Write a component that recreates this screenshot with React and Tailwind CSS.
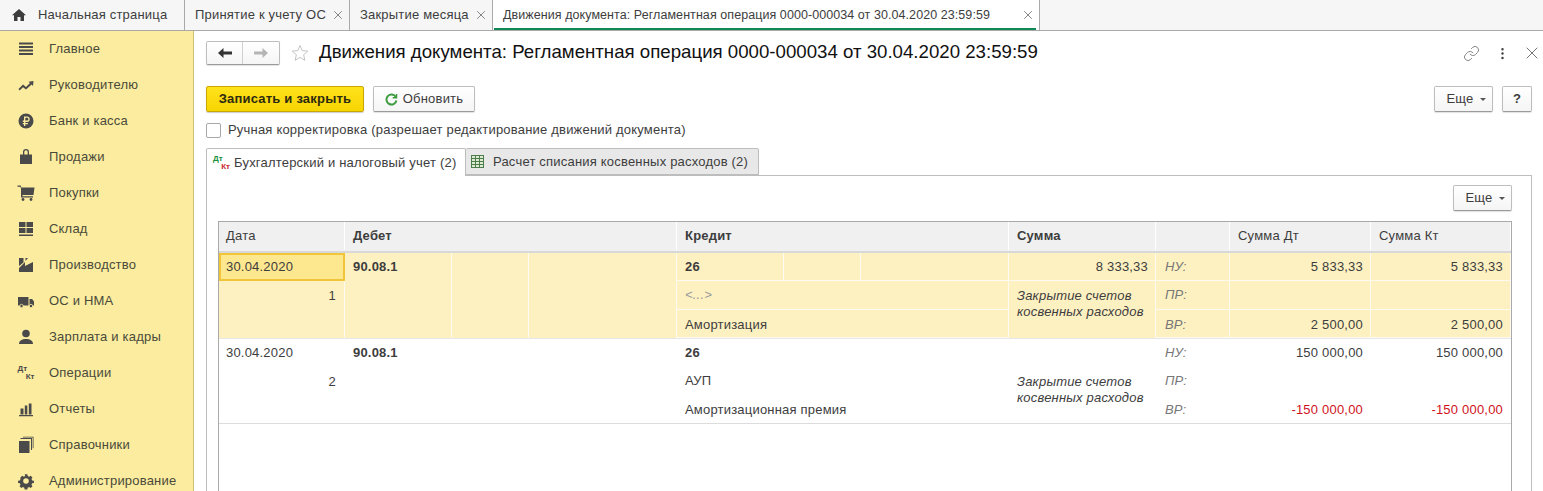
import { Link, MoreVertical, X } from 'lucide-react'

const font = { fontFamily: '"Liberation Sans", Arial, sans-serif' }

const G = ({ children }) => (
  <svg width="18" height="18" viewBox="0 0 18 18" fill="#4a4a4a" className="shrink-0">
    {children}
  </svg>
)

const menuIcons = {
  menu: <G><path d="M2 2.500h14v2H2zM2 6h14v2H2zM2 9.500h14v2H2zM2 13h14v2H2z" /></G>,
  chart: <G><path d="M1.500 13 L6 8.500 L9 11 L13 7 L11.500 5.800 L16.500 5 L16 10 L14.600 8.600 L9 13.600 L6 11.200 L2.600 14.500z" /></G>,
  rub: (
    <G>
      <circle cx="9" cy="9" r="7.500" />
      <path d="M7 4.500h3a2.500 2.500 0 0 1 0 5.400H8.300v1h2.600v1.400H8.300v1.600H7v-1.600H5.800v-1.400H7v-1H5.800V8.600H7zM8.300 5.800v2.800H10a1.400 1.400 0 0 0 0-2.800z" fill="#fbec9f" />
    </G>
  ),
  bag: <G><path d="M3 6.500h3V4a3 3 0 0 1 6 0v2.500h3V16H3zM7.300 6.500h3.400V4a1.700 1.700 0 0 0-3.400 0z" /></G>,
  cart: (
    <G>
      <path d="M0.500 1.500h3.200l.6 2H17.500l-1 7.500H5.500v1.300h10.500v1.300H4V4L3 2.800H.5z" />
      <circle cx="6" cy="15.500" r="1.400" />
      <circle cx="14" cy="15.500" r="1.400" />
    </G>
  ),
  store: <G><path d="M2 2h6.500v5H2zM9.500 2H16v5H9.500zM2 8h6.500v5H2zM9.500 8H16v5H9.500zM2 14.500h14V16H2z" /></G>,
  factory: <G><path d="M2 2h4.500v4.500L2 10zM8.500 2H11L8.500 5zM2 16v-4l6-6v4l8-4v10z" /></G>,
  truck: (
    <G>
      <path d="M1 5h10.500v8.500H1zM12.500 7h2.600L17 9.500v4h-4.500z" />
      <circle cx="4.500" cy="14" r="1.700" stroke="#fbec9f" strokeWidth=".8" />
      <circle cx="14" cy="14" r="1.700" stroke="#fbec9f" strokeWidth=".8" />
    </G>
  ),
  user: <G><circle cx="9" cy="5.500" r="3.800" /><path d="M2 16c0-3.500 3-5 7-5s7 1.500 7 5z" /></G>,
  reports: <G><path d="M3.500 8.500h3v6H3.500zM7.800 5.500h2.500v9H7.800zM11.800 3.500h2.700v11h-2.700zM2 15h14v1.200H2z" /></G>,
  book: (
    <G>
      <path d="M2 5h10.500v12H2z" />
      <path d="M3.500 3h10.500v11h1V2H3.500zM6 .8h10.500v11.500h-.8V1.600H6z" />
    </G>
  ),
  gear: (
    <G>
      <path d="M7.500 1.500h3l.4 2 1.500.7 1.800-1.100 2 2-1.100 1.800.7 1.500 2 .4v2.400l-2 .4-.7 1.500 1.100 1.800-2 2-1.800-1.100-1.500.7-.4 2h-3l-.4-2-1.500-.7-1.800 1.100-2-2 1.100-1.800-.7-1.500-2-.4V8.800l2-.4.7-1.500L2.800 5.100l2-2 1.800 1.100 1.500-.7z" transform="translate(.9 .9) scale(.9)" />
      <circle cx="9" cy="9" r="2.800" fill="#fbec9f" />
    </G>
  ),
}

const DtKt = ({ dark }) => (
  <span className="relative block h-[16px] w-[17px] shrink-0 text-[8px] leading-[8px] font-bold tracking-normal">
    <span className={`absolute top-0 left-0 ${dark ? 'text-[#4a4a4a]' : 'text-[#1a8f3c]'}`}>Дт</span>
    <span className={`absolute right-0 bottom-0 ${dark ? 'text-[#4a4a4a]' : 'text-[#c9252b]'}`}>Кт</span>
  </span>
)

const menu = [
  ['Главное', 'menu'],
  ['Руководителю', 'chart'],
  ['Банк и касса', 'rub'],
  ['Продажи', 'bag'],
  ['Покупки', 'cart'],
  ['Склад', 'store'],
  ['Производство', 'factory'],
  ['ОС и НМА', 'truck'],
  ['Зарплата и кадры', 'user'],
  ['Операции', 'dtkt'],
  ['Отчеты', 'reports'],
  ['Справочники', 'book'],
  ['Администрирование', 'gear'],
]

function TopTab({ label, width, active }) {
  return (
    <div
      className={`relative flex h-full items-center justify-between border-r border-[#a9a9a9] pr-[4px] pl-[10px] ${active ? 'bg-white text-[12.5px] tracking-[0.07px]' : ''}`}
      style={{ width }}
    >
      <span className="whitespace-nowrap">{label}</span>
      <X size={14} strokeWidth={1.2} className="shrink-0 text-[#555]" />
      {active && <div className="absolute right-[3px] bottom-0 left-[1px] h-[2px] bg-[#0f8a55]" />}
    </div>
  )
}

function Btn({ children, className = '' }) {
  return (
    <div className={`flex h-[26px] items-center justify-center rounded-[2px] border border-[#bdbdbd] border-b-[#9a9a9a] bg-gradient-to-b from-white to-[#f5f5f5] shadow-[0_1px_1px_rgba(0,0,0,0.12)] ${className}`}>
      {children}
    </div>
  )
}

function More({ className = '' }) {
  return (
    <Btn className={`w-[59px] gap-[6px] pl-[5px] ${className}`}>
      <span>Еще</span>
      <span className="h-0 w-0 border-x-[3px] border-t-[3px] border-x-transparent border-t-[#555]" />
    </Btn>
  )
}

const cols = 'grid grid-cols-[126px_332px_332px_147px_74px_141px_140px]'

function Row({ n, selected, sub1, sub2, sum, lines, border }) {
  const line = selected ? 'border-[#fffaf0]' : 'border-transparent'
  const cell = `border-r border-b ${line} flex items-center`
  return (
    <div className={`${cols} ${selected ? 'grid-rows-[28px_29px_28px] bg-[#fdf1c2]' : 'grid-rows-[28px_29px_27px]'} ${border}`}>
      {selected ? (
        <div className="flex items-center border-2 border-[#f0c53a] bg-[#fde78f] pl-[5px]">30.04.2020</div>
      ) : (
        <div className={`${cell} pl-[7px]`}>30.04.2020</div>
      )}
      <div className={`${line} col-start-1 row-span-2 row-start-2 flex justify-end border-r pt-[5px] pr-[8px]`}>{n}</div>
      <div className="col-start-2 row-span-3 row-start-1 grid grid-cols-[107px_77px_148px]">
        <div className={`border-r ${line} pt-[4px] pl-[8px] font-bold`}>90.08.1</div>
        <div className={`border-r ${line}`} />
        <div className={`border-r ${line}`} />
      </div>
      <div className={`col-start-3 row-start-1 grid grid-cols-[107px_77px_148px] border-b ${line}`}>
        <div className={`flex items-center border-r ${line} pl-[8px] font-bold`}>26</div>
        <div className={`border-r ${line}`} />
        <div className={`border-r ${line}`} />
      </div>
      <div className={`${cell} col-start-3 row-start-2 pl-[8px] ${sub1 === '<...>' ? 'text-[#9a9a9a] italic' : ''}`}>{sub1}</div>
      <div className={`${cell} col-start-3 row-start-3 pt-[2px] pl-[8px]`}>{sub2}</div>
      <div className={`${cell} col-start-4 row-start-1 justify-end pr-[7px]`}>{sum}</div>
      <div className={`col-start-4 row-span-2 row-start-2 border-r ${line} px-[8px] pt-[7px] leading-[16px] italic`}>
        Закрытие счетов косвенных расходов
      </div>
      {lines.map(([tag, dt, red], i) => {
        const shift = i === 2 ? 'pt-[2px]' : ''
        return (
          <div key={tag} className="contents">
            <div className={`${cell} ${shift} col-start-5 pl-[9px] text-[#777] italic`} style={{ gridRowStart: i + 1 }}>{tag}</div>
            <div className={`${cell} ${shift} col-start-6 justify-end pr-[7px] ${red ? 'text-[#d0121b]' : ''}`} style={{ gridRowStart: i + 1 }}>{dt}</div>
            <div className={`${cell} ${shift} col-start-7 justify-end pr-[7px] ${red ? 'text-[#d0121b]' : ''}`} style={{ gridRowStart: i + 1 }}>{dt}</div>
          </div>
        )
      })}
    </div>
  )
}

export default function App() {
  return (
    <div className="flex h-[491px] w-[1543px] flex-col overflow-hidden bg-white text-[13px] tracking-[0.2px] text-[#3d3d3d]" style={font}>
      {/* вкладки */}
      <div className="flex h-[31px] shrink-0 border-b border-[#a9a9a9] bg-[#f6f6f6]">
        <div className="flex h-full w-[185px] items-center gap-[12px] border-r border-[#a9a9a9] pl-[12px]">
          <svg width="14" height="12" viewBox="0 0 14 12" fill="#3d3d3d" className="shrink-0">
            <path d="M7 0 L14 6.200 H12 V12 H8.500 V8 H5.500 V12 H2 V6.200 H0z" />
          </svg>
          <span>Начальная страница</span>
        </div>
        <TopTab label="Принятие к учету ОС" width={165} />
        <TopTab label="Закрытие месяца" width={143} />
        <TopTab label="Движения документа: Регламентная операция 0000-000034 от 30.04.2020 23:59:59" width={547} active />
      </div>

      <div className="flex min-h-0 flex-1">
        {/* меню разделов */}
        <div className="h-full w-[194px] shrink-0 border-r border-[#cdbf75] bg-[#fbec9f] pl-[1px]">
          {menu.map(([label, icon]) => (
            <div key={label} className="flex h-9 items-center gap-[14px] pl-[16px]">
              <span className="flex w-[18px] justify-center">{icon === 'dtkt' ? <DtKt dark /> : menuIcons[icon]}</span>
              <span className="whitespace-nowrap text-[#4a4a3a]">{label}</span>
            </div>
          ))}
        </div>

        {/* форма */}
        <div className="flex min-w-0 flex-1 flex-col pt-[10px] pr-[11px] pl-[12px]">
          <div className="flex h-[24px] shrink-0 items-center">
            <div className="flex h-[24px] w-[74px] rounded-[2px] border border-[#bdbdbd] border-b-[#9a9a9a] bg-gradient-to-b from-white to-[#f5f5f5] shadow-[0_1px_1px_rgba(0,0,0,0.12)]">
              <div className="flex w-[36px] items-center justify-center border-r border-[#d0d0d0]">
                <svg width="14" height="10" viewBox="0 0 14 10" fill="#333"><path d="M0 5 L5.500 0 V3.500 H14 V6.500 H5.500 V10z" /></svg>
              </div>
              <div className="flex flex-1 items-center justify-center">
                <svg width="14" height="10" viewBox="0 0 14 10" fill="#b5b5b5"><path d="M14 5 L8.500 0 V3.500 H0 V6.500 H8.500 V10z" /></svg>
              </div>
            </div>
            <svg width="18" height="18" viewBox="0 0 18 18" fill="none" stroke="#c4c4c4" className="mr-[10px] ml-[11px] shrink-0">
              <path d="M9 1.500 L11.200 6.600 L16.800 7.100 L12.600 10.800 L13.900 16.300 L9 13.400 L4.100 16.300 L5.400 10.800 L1.200 7.100 L6.800 6.600z" />
            </svg>
            <span className="-mt-[2px] text-[18.67px] tracking-normal whitespace-nowrap text-[#111]">
              Движения документа: Регламентная операция 0000-000034 от 30.04.2020 23:59:59
            </span>
            <div className="ml-auto flex items-center text-[#555]">
              <Link size={17} strokeWidth={1.1} className="text-[#666]" />
              <MoreVertical size={15} strokeWidth={2} className="ml-[15px] text-[#444]" />
              <X size={20} strokeWidth={0.9} className="mr-[-10px] ml-[12px] text-[#444]" />
            </div>
          </div>

          <div className="mt-[21px] flex shrink-0 items-center">
            <div className="flex h-[26px] w-[158px] items-center justify-center rounded-[2px] border border-[#c8a800] bg-gradient-to-b from-[#ffe21a] to-[#f7d500] font-bold text-[#2e2a10] shadow-[0_1px_1px_rgba(0,0,0,0.2)]">
              Записать и закрыть
            </div>
            <Btn className="ml-[9px] w-[102px] gap-[5px]">
              <svg width="13" height="13" viewBox="0 0 13 13" fill="none" stroke="#3f9b3f" strokeWidth="2">
                <path d="M10.800 4 A5 5 0 1 0 11.400 7.500" />
                <path d="M11.500 1 V4.800 H7.700" strokeWidth="1.500" />
              </svg>
              <span>Обновить</span>
            </Btn>
            <More className="ml-auto" />
            <Btn className="ml-[9px] w-[30px] font-bold">?</Btn>
          </div>

          <div className="mt-[8px] flex h-[20px] shrink-0 items-center gap-[7px]">
            <div className="h-[15px] w-[15px] rounded-[2px] border border-[#a8a8a8] bg-white" />
            <span className="whitespace-nowrap">Ручная корректировка (разрешает редактирование движений документа)</span>
          </div>

          {/* вкладки формы */}
          <div className="relative z-10 mt-[8px] flex h-[28px] shrink-0 items-stretch">
            <div className="flex w-[260px] items-center gap-[4px] rounded-t-[2px] border border-b-0 border-[#bdbdbd] bg-white pl-[6px]">
              <DtKt />
              <span className="whitespace-nowrap">Бухгалтерский и налоговый учет (2)</span>
            </div>
            <div className="mb-px flex w-[293px] items-center gap-[9px] rounded-t-[2px] border border-l-0 border-[#bdbdbd] bg-[#e8e8e8] pl-[5px]">
              <svg width="13" height="13" viewBox="0 0 13 13" className="shrink-0">
                <rect x=".5" y=".5" width="12" height="12" fill="#dcebd2" stroke="#4d7d4d" />
                <path d="M.5 3.500h12M.5 6.500h12M.5 9.500h12M4.500 .5v12M8.500 .5v12" stroke="#4d7d4d" />
              </svg>
              <span className="whitespace-nowrap">Расчет списания косвенных расходов (2)</span>
            </div>
          </div>

          <div className="-mt-px flex-1 border border-b-0 border-[#bdbdbd] pt-[9px] pr-[19px] pl-[11px]">
            <div className="flex justify-end">
              <More />
            </div>
            <div className="mt-[10px] h-[300px] border border-b-0 border-[#a9a9a9]">
              <div className={`${cols} h-[31px] border-b-2 border-[#d8d8d8] bg-[#f0f0f0] pb-[1px]`}>
                {[['Дата'], ['Дебет', 1], ['Кредит', 1], ['Сумма', 1], [''], ['Сумма Дт'], ['Сумма Кт']].map(([t, b], i) => (
                  <div key={i} className={`flex items-center border-r border-white ${i === 0 ? 'pl-[7px]' : 'pl-[8px]'} ${b ? 'font-bold' : ''}`}>{t}</div>
                ))}
              </div>
              <Row
                n="1"
                selected
                sub1="<...>"
                sub2="Амортизация"
                sum="8 333,33"
                lines={[['НУ:', '5 833,33'], ['ПР:', ''], ['ВР:', '2 500,00']]}
                border="border-b border-[#e6e6e6]"
              />
              <Row
                n="2"
                sub1="АУП"
                sub2="Амортизационная премия"
                sum=""
                lines={[['НУ:', '150 000,00'], ['ПР:', ''], ['ВР:', '-150 000,00', true]]}
                border="border-b border-[#dcdcdc]"
              />
            </div>
          </div>
        </div>
      </div>
    </div>
  )
}
